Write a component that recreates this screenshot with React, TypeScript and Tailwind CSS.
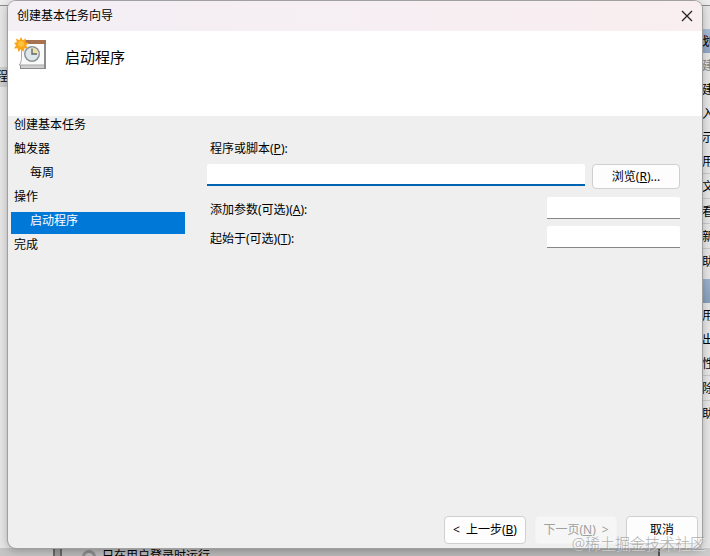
import React from 'react';

const steps = [
  { label: '创建基本任务' },
  { label: '触发器' },
  { label: '每周', nested: true },
  { label: '操作' },
  { label: '启动程序', nested: true, current: true },
  { label: '完成' },
];

const libraryActions = [
  { label: '建', dim: true },
  { label: '建' },
  { label: '入' },
  { label: '示' },
  { label: '用' },
  { label: '文', line: true },
  { label: '看', line: true },
  { label: '新', line: true },
  { label: '助', line: true },
];

const itemActions = [
  { label: '用' },
  { label: '出' },
  { label: '性' },
  { label: '除', line: true },
  { label: '助', line: true },
];

const TaskIcon = () => (
  <svg width="34" height="34" viewBox="0 0 34 34" aria-hidden="true">
    <path d="M6 26h25v6H6z" fill="#8d8d8d" />
    <path d="M7 27h23v4H7z" fill="#cfcfcf" />
    <path d="M7.500 4h23v24H5c2.500-2 2.500-6 2.500-9z" fill="#fafafa" stroke="#a9a9a9" strokeWidth="1" />
    <path d="M8 3h24v4H8z" fill="#a8714f" />
    <path d="M30 7h2v25h-2z" fill="#8d8d8d" />
    <circle cx="18" cy="17" r="8" fill="#8b949b" />
    <circle cx="18" cy="17" r="6.500" fill="#dfe7eb" />
    <path d="M18 17v-6.500a6.500 6.500 0 0 1 6.500 6.500z" fill="#f3dfa6" />
    <path d="M18 11.500V17h5" fill="none" stroke="#596873" strokeWidth="1.400" />
    <path
      d="M7 0l1.700 3.300L12 1.500l-.6 3.700 3.600.8-3 2.200 2 3.300-3.600-.3-.8 3.700L7 12l-2.600 2.900-.8-3.700-3.600.3 2-3.300L0 6l2.800-.8L2 1.500l3.300 1.800z"
      fill="#f9a51a"
    />
    <circle cx="7" cy="7" r="3" fill="#ffc23c" />
  </svg>
);

const ActionRow = ({ label, dim, line }: { label: string; dim?: boolean; line?: boolean }) => (
  <li className={`leading-[26px] ${line ? 'h-[25px] border-t border-[#c9c9c9]' : 'h-6'} ${dim ? 'text-[#858585]' : ''}`}>
    {label}
  </li>
);

const ConsoleWindow = () => (
  <div className="flex h-full flex-col bg-[#e6e6e6]">
    <div className="h-[5px] shrink-0 bg-[#ececec]" />
    <div className="flex min-h-0 flex-1 justify-between border-t border-[#8c8c8c]">
      <div className="w-2 overflow-hidden pt-[61px]">
        <div className="flex h-5 items-center justify-end bg-[#cfcfcf]">程</div>
      </div>
      <div className="w-2 overflow-hidden pt-[23px]">
        <div className="h-6 bg-linear-to-b from-[#a9bdd6] to-[#8fa6c3] leading-[26px]">划</div>
        <ul>
          {libraryActions.map((a, i) => <ActionRow key={i} {...a} />)}
        </ul>
        <div className="mt-1.5 h-6 bg-linear-to-b from-[#9db1cb] to-[#879eba]" />
        <ul>
          {itemActions.map((a, i) => <ActionRow key={i} {...a} />)}
        </ul>
      </div>
    </div>
    <div className="flex h-2 shrink-0 overflow-hidden">
      <div className="w-[53px] bg-[#c4c4c4]" />
      <div className="w-[9px] border-x-2 border-[#666] bg-[#999]" />
      <div className="flex flex-1 items-start overflow-hidden border-r-2 border-[#555] bg-[#b8b8b8] pl-5">
        <span className="mt-0.5 size-3.5 shrink-0 rounded-full border-[3px] border-[#8b8b8b]" />
        <span className="pl-1.5 leading-4">只在用户登录时运行</span>
      </div>
      <div className="w-[50px] bg-[#cbcbcb]" />
    </div>
  </div>
);

const field = 'rounded-t-[2px] bg-white px-1 outline-none';
const button = 'rounded border border-[#d0d0d0] bg-[#fdfdfd]';

const WizardDialog = () => (
  <div
    role="dialog"
    aria-labelledby="wizard-title"
    className="absolute inset-x-2 top-px bottom-2 flex flex-col overflow-hidden rounded-lg bg-[#efefef] shadow-[0_0_0_1px_#a0a0a0,0_2px_10px_rgba(0,0,0,0.3)]"
  >
    <div className="flex h-[30px] shrink-0 items-center justify-between bg-linear-to-r from-[#f3eff5] to-[#f9eef0] pr-[7px] pl-[9px]">
      <h1 id="wizard-title">创建基本任务向导</h1>
      <button type="button" aria-label="关闭" className="p-0.5">
        <svg width="12" height="12" viewBox="0 0 12 12">
          <path d="M1 1l10 10M11 1L1 11" stroke="#222" strokeWidth="1.300" />
        </svg>
      </button>
    </div>
    <header className="flex h-[85px] shrink-0 items-start bg-white pt-1.5 pl-1.5">
      <TaskIcon />
      <h2 className="pt-2 pl-[17px] text-[15px] leading-6">启动程序</h2>
    </header>

    <div className="flex flex-1 items-start">
      <ol className="flex w-[177px] shrink-0 flex-col gap-1.5 pl-[3px]">
        {steps.map((s) => (
          <li
            key={s.label}
            aria-current={s.current ? 'step' : undefined}
            className={`${s.nested ? 'pl-[19px]' : 'pl-[3px]'} ${s.current ? '-mb-1 bg-[#0078d7] pb-1 text-white' : ''}`}
          >
            {s.label}
          </li>
        ))}
      </ol>
      <form className="flex flex-1 flex-col pt-6 pr-[22px] pl-[22px]">
        <label htmlFor="program" className="pl-[3px]">程序或脚本(<u>P</u>):</label>
        <div className="mt-1.5 flex items-start gap-[7px]">
          <input id="program" className={`h-[22px] min-w-0 flex-1 border-b-2 border-[#0063b1] ${field}`} />
          <button type="button" className={`h-[25px] w-[88px] ${button}`}>浏览(<u>R</u>)...</button>
        </div>
        <div className="mt-2 flex flex-col gap-[7px]">
          <div className="flex items-start justify-between pl-[3px]">
            <label htmlFor="args" className="pt-1">添加参数(可选)(<u>A</u>):</label>
            <input id="args" className={`h-[22px] w-[133px] border-b border-[#868686] ${field}`} />
          </div>
          <div className="flex items-start justify-between pl-[3px]">
            <label htmlFor="start" className="pt-1">起始于(可选)(<u>T</u>):</label>
            <input id="start" className={`h-[22px] w-[133px] border-b border-[#868686] ${field}`} />
          </div>
        </div>
      </form>
    </div>

    <footer className="flex justify-end gap-[9px] pr-1 pb-1">
      <button type="button" className={`flex h-7 w-[82px] items-center justify-center gap-1.5 ${button}`}>
        <span>&lt;</span>
        <span>上一步(<u>B</u>)</span>
      </button>
      <button type="button" disabled className="flex h-7 w-[82px] items-center justify-center gap-1.5 rounded border border-[#f3f3f3] bg-[#f6f6f6] text-[#a0a0a0]">
        <span>下一页(<u>N</u>)</span>
        <span>&gt;</span>
      </button>
      <button type="button" className={`h-7 w-[72px] ${button}`}>取消</button>
    </footer>
  </div>
);

export default function App() {
  return (
    <div className="relative h-screen overflow-hidden font-['Noto_Sans','Noto_Sans_CJK_SC',sans-serif] text-xs leading-[18px] whitespace-nowrap text-black">
      <ConsoleWindow />
      <WizardDialog />
      <span className="pointer-events-none absolute right-[5px] bottom-1 text-[15px] font-light text-[#8c8c8c]/70 [text-shadow:1px_1px_0_rgba(255,255,255,0.5)]">
        @稀土掘金技术社区
      </span>
    </div>
  );
}
